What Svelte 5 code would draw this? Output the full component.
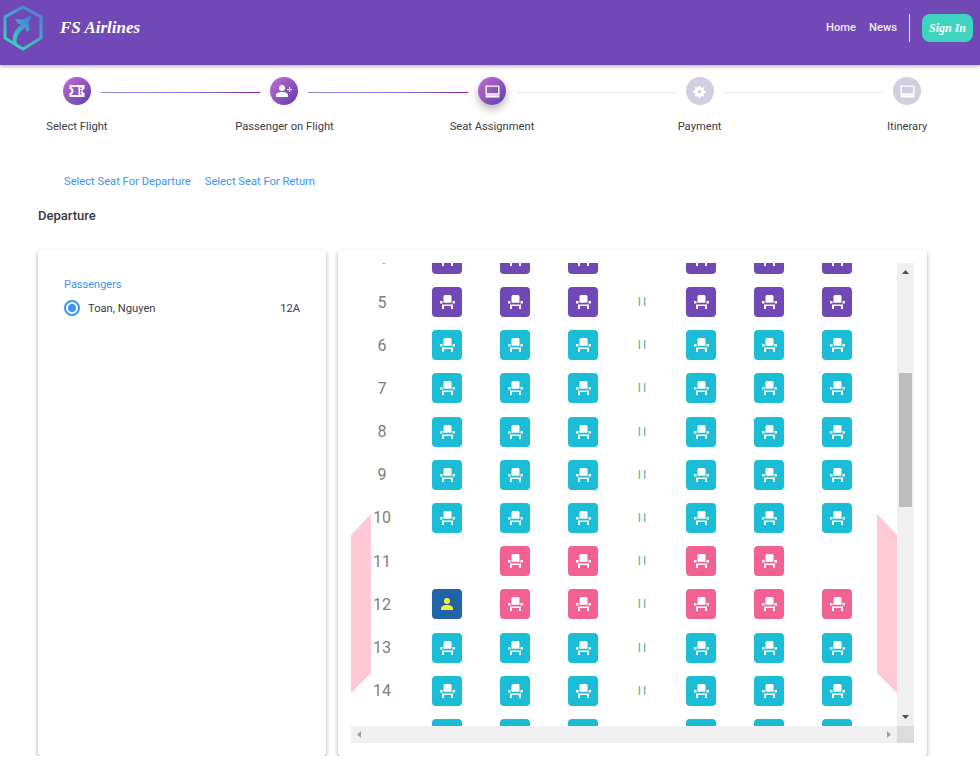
<script lang="ts">
	type Seat = 'free' | 'business' | 'exit' | 'taken' | 'empty';

	const steps = [
		{ label: 'Select Flight', icon: 'ticket', done: true },
		{ label: 'Passenger on Flight', icon: 'person', done: true },
		{ label: 'Seat Assignment', icon: 'screen', active: true },
		{ label: 'Payment', icon: 'gear' },
		{ label: 'Itinerary', icon: 'screen' }
	];

	function seatsFor(row: number): Seat[] {
		if (row <= 5) return Array(6).fill('business');
		if (row === 11) return ['empty', 'exit', 'exit', 'exit', 'exit', 'empty'];
		if (row === 12) return ['taken', 'exit', 'exit', 'exit', 'exit', 'exit'];
		return Array(6).fill('free');
	}

	// only the rows in view of the seat map
	const rows = Array.from({ length: 12 }, (_, i) => ({ num: i + 4, seats: seatsFor(i + 4) }));
</script>

<header class="topbar">
	<div class="brand">
		<svg class="logo" viewBox="0 0 46 52" width="46" height="52">
			<defs>
				<linearGradient id="logoGrad" x1="0.8" y1="0" x2="0.2" y2="1">
					<stop offset="0" stop-color="#4a7fd8" />
					<stop offset="1" stop-color="#35d6b8" />
				</linearGradient>
			</defs>
			<path d="M23 5 L41 15 V36 L23 47 L5 36 V15 Z" fill="none" stroke="url(#logoGrad)" stroke-width="3" />
			<path d="M31 14 C29 14 26 15.500 23.500 17.500 L15 17 L17.500 21.500 L21 22.500 C15.500 27 12 33 13 39 C14 44 18 47 24 47 C19 45 16 42 16.500 38 C17 33 21 28.500 25 25.500 L26.500 30 L29.500 28 L28.500 20 C30.500 18 32 15 31 14 Z" fill="url(#logoGrad)" />
		</svg>
		<span class="brand-name">FS Airlines</span>
	</div>
	<nav class="nav">
		<span class="nav-link">Home</span>
		<span class="nav-link">News</span>
		<span class="nav-sep"></span>
		<span class="signin">Sign In</span>
	</nav>
</header>

<section class="stepper">
	{#each steps as step, i}
		{#if i > 0}
			<div class="connector" class:filled={step.done || step.active}></div>
		{/if}
		<div class="step">
			<div class="circle" class:on={step.done || step.active} class:active={step.active}>
				{#if step.icon === 'ticket'}
					<svg viewBox="0 0 16 16" width="16" height="16"><path d="M0.500 2h15v4a2 2 0 0 0 0 4v4H0.500v-4a2 2 0 0 0 0-4z M2.500 4v.8a3.500 3.500 0 0 1 0 6.400V12h7V4z M11 4.500v1.800h1.500V4.500z M11 7.100v1.800h1.500V7.100z M11 9.700v1.800h1.500V9.700z" fill="#fff" fill-rule="evenodd" /></svg>
				{:else if step.icon === 'person'}
					<svg viewBox="0 0 16 16" width="16" height="16"><circle cx="6" cy="5" r="3" fill="#fff" /><path d="M0 14v-2c0-2 3-3 6-3s6 1 6 3v2z" fill="#fff" /><path d="M13 4v2h-2v1h2v2h1V7h2V6h-2V4z" fill="#fff" /></svg>
				{:else if step.icon === 'screen'}
					<svg viewBox="0 0 16 14" width="15" height="13"><path d="M0.500 0.500h15v10h-15z M2 2v7h12V2z" fill="#fff" fill-rule="evenodd" /><path d="M0.500 11h15v2.500h-15z" fill="#fff" /></svg>
				{:else}
					<svg viewBox="0 0 16 16" width="13" height="13"><path d="M7 1h2l.4 2 1.300.6 1.800-1 1.400 1.400-1 1.800.6 1.300 2 .4v2l-2 .4-.6 1.300 1 1.800-1.400 1.400-1.800-1-1.300.6-.4 2H7l-.4-2-1.300-.6-1.800 1-1.400-1.400 1-1.800-.6-1.300-2-.4V7l2-.4.6-1.300-1-1.800 1.400-1.400 1.800 1 1.300-.6z" fill="#fff" /><circle cx="8" cy="8" r="2.300" fill="#cfcfe0" /></svg>
				{/if}
			</div>
			<span class="step-label">{step.label}</span>
		</div>
	{/each}
</section>

<div class="tabs">
	<span>Select Seat For Departure</span>
	<span>Select Seat For Return</span>
</div>

<h2 class="leg-title">Departure</h2>

<main class="panels">
	<aside class="card passengers">
		<div class="passengers-title">Passengers</div>
		<div class="passenger">
			<span class="radio"><span class="radio-dot"></span></span>
			<span class="passenger-name">Toan, Nguyen</span>
			<span class="passenger-seat">12A</span>
		</div>
	</aside>

	<div class="card plane">
		<div class="viewport">
			<div class="cabin">
				<div class="wing left"></div>
				<div class="wing right"></div>
				{#each rows as row}
					<div class="row">
						<span class="row-num">{row.num}</span>
						{#each row.seats as seat, i}
							{#if i === 3}
								<span class="aisle">I I</span>
							{/if}
							{#if seat === 'empty'}
								<span class="seat-gap"></span>
							{:else}
								<span class="seat {seat}">
									{#if seat === 'taken'}
										<svg viewBox="0 0 30 30" width="30" height="30"><circle cx="15" cy="12" r="3" fill="#ffee33" /><path d="M9 21v-1.500c0-2.500 3-3.500 6-3.500s6 1 6 3.500V21z" fill="#ffee33" /></svg>
									{:else}
										<svg viewBox="0 0 30 30" width="30" height="30">
											<path d="M11.500 15.700V9.500a1.500 1.500 0 0 1 1.500-1.500h5a1.500 1.500 0 0 1 1.500 1.500V15.700z" fill="#fff" />
											<path d="M8 14h2.500v2.500H8z M20.500 14H23v2.500h-2.500z" fill="#fff" />
											<path d="M10 17.500h11V22h-2v-3h-7v3h-2z" fill="#fff" />
										</svg>
									{/if}
								</span>
							{/if}
						{/each}
					</div>
				{/each}
			</div>
		</div>

		<div class="vbar">
			<svg class="vbtn" viewBox="0 0 17 17" width="17" height="17"><path d="M8.500 7L12 11H5z" fill="#505050" /></svg>
			<div class="vtrack"><div class="vthumb"></div></div>
			<svg class="vbtn" viewBox="0 0 17 17" width="17" height="17"><path d="M5 6h7L8.500 10z" fill="#505050" /></svg>
		</div>
		<div class="hbar">
			<svg viewBox="0 0 17 17" width="17" height="17"><path d="M6 8.500L10 5v7z" fill="#a3a3a3" /></svg>
			<svg viewBox="0 0 17 17" width="17" height="17"><path d="M11 8.500L7 5v7z" fill="#a3a3a3" /></svg>
		</div>
		<div class="corner"></div>
	</div>
</main>

<style>
	:global(body) {
		margin: 0;
		background: #fff;
		font-family: Roboto, 'Liberation Sans', sans-serif;
		color: #3c3c46;
	}

	.topbar {
		height: 65px;
		box-sizing: border-box;
		background: #7149b7;
		box-shadow: 0 1px 4px rgba(0, 0, 0, 0.35);
		display: flex;
		align-items: center;
		justify-content: space-between;
		padding: 0 7px 9px 0;
		position: relative;
	}

	.brand {
		display: flex;
		align-items: center;
		gap: 14px;
	}

	.logo {
		display: block;
	}

	.brand-name {
		font-family: 'Liberation Serif', serif;
		font-style: italic;
		font-weight: 700;
		font-size: 17px;
		color: #fff;
	}

	.nav {
		display: flex;
		align-items: center;
		gap: 13px;
	}

	.nav-link {
		color: #f0eaf8;
		font-size: 11.200px;
		font-weight: 500;
		position: relative;
		top: -1px;
	}

	.nav-sep {
		width: 1px;
		height: 28px;
		background: #e8e0f4;
		margin-left: -1px;
		margin-right: -1px;
	}

	.signin {
		width: 51px;
		height: 28px;
		border-radius: 8px;
		background: #3ed4be;
		color: #fff;
		font-family: 'Liberation Serif', serif;
		font-style: italic;
		font-weight: 700;
		font-size: 12px;
		display: flex;
		align-items: center;
		justify-content: center;
	}

	.stepper {
		display: flex;
		align-items: flex-start;
		margin: 12px 48.900px 0 52.900px;
		height: 64px;
	}

	.step {
		width: 48px;
		flex: none;
		display: flex;
		flex-direction: column;
		align-items: center;
	}

	.circle {
		width: 28px;
		height: 28px;
		border-radius: 50%;
		background: #cfcfe0;
		display: flex;
		align-items: center;
		justify-content: center;
	}

	.circle.on {
		background: linear-gradient(135deg, #c56cd6, #5e3fa8);
	}

	.circle.active {
		box-shadow: 0 4px 8px rgba(0, 0, 0, 0.3);
	}

	.step-label {
		margin-top: 15px;
		font-size: 11.200px;
		line-height: 14px;
		white-space: nowrap;
	}

	.connector {
		flex: 1;
		height: 1px;
		margin-top: 15px;
		background: #e8e8f0;
	}

	.connector.filled {
		background: linear-gradient(90deg, #9a86dc, #8a7bd8 55%, #8e1a8e);
	}

	.tabs {
		display: flex;
		gap: 14px;
		margin: 34px 0 0 64px;
		color: #3b94f0;
		font-size: 11.200px;
		line-height: 14px;
	}

	.leg-title {
		margin: 19px 0 0 38px;
		font-size: 13px;
		line-height: 16px;
		font-weight: 500;
		color: #3a3a44;
	}

	.panels {
		display: flex;
		gap: 12px;
		margin: 26px 53px 0 38px;
		height: 506px;
	}

	.card {
		background: #fff;
		border-radius: 4px;
		box-shadow: 0 2px 4px rgba(0, 0, 0, 0.35);
	}

	.passengers {
		width: 288px;
		flex: none;
		box-sizing: border-box;
		padding: 28px 26px;
	}

	.passengers-title {
		color: #3b94f0;
		font-size: 11px;
		line-height: 13px;
	}

	.passenger {
		display: flex;
		align-items: center;
		margin-top: 9px;
		font-size: 11.200px;
	}

	.radio {
		width: 16px;
		height: 16px;
		box-sizing: border-box;
		border: 2px solid #3b94f0;
		border-radius: 50%;
		display: flex;
		align-items: center;
		justify-content: center;
		margin-right: 8px;
	}

	.radio-dot {
		width: 8px;
		height: 8px;
		border-radius: 50%;
		background: #3b94f0;
	}

	.passenger-seat {
		margin-left: auto;
	}

	.plane {
		flex: 1;
		min-width: 0;
		padding: 13px;
		box-sizing: border-box;
		display: grid;
		grid-template-columns: 1fr 17px;
		grid-template-rows: 1fr 17px;
	}

	.viewport {
		overflow: hidden;
		min-height: 0;
	}

	.cabin {
		position: relative;
		margin-top: -19.200px;
	}

	.vbar {
		background: #f0f0f0;
		display: flex;
		flex-direction: column;
		min-height: 0;
	}

	.vbtn {
		display: block;
		flex: none;
	}

	.vtrack {
		flex: 1;
		padding-top: 93px;
		box-sizing: border-box;
	}

	.vthumb {
		width: 13px;
		height: 134px;
		margin-left: 2px;
		background: #bdbdbd;
	}

	.hbar {
		background: #f0f0f0;
		display: flex;
		justify-content: space-between;
	}

	.hbar svg {
		display: block;
	}

	.corner {
		background: #dcdcdc;
	}

	.wing {
		position: absolute;
		top: 270.200px;
		width: 20px;
		height: 179px;
		background: #ffc8d5;
	}

	.wing.left {
		left: 0;
		clip-path: polygon(100% 0, 0 21px, 0 100%, 100% 159px);
	}

	.wing.right {
		right: 0;
		clip-path: polygon(0 0, 100% 21px, 100% 100%, 0 159px);
	}

	.row {
		display: grid;
		grid-template-columns: 62px 68px 68px 68px 50px 68px 68px 68px;
		height: 30px;
		margin-bottom: 13.200px;
		align-items: center;
		justify-items: center;
		position: relative;
	}

	.row-num {
		font-size: 16px;
		color: #7d7d7d;
	}

	.aisle {
		font-size: 12px;
		word-spacing: -1px;
		color: #5fa89a;
	}

	.seat {
		width: 30px;
		height: 30px;
		border-radius: 4px;
		display: block;
	}

	.seat svg {
		display: block;
	}

	.seat.free {
		background: #1abcd6;
	}

	.seat.business {
		background: #7149b7;
	}

	.seat.exit {
		background: #f36093;
	}

	.seat.taken {
		background: #1f64a4;
	}
</style>
